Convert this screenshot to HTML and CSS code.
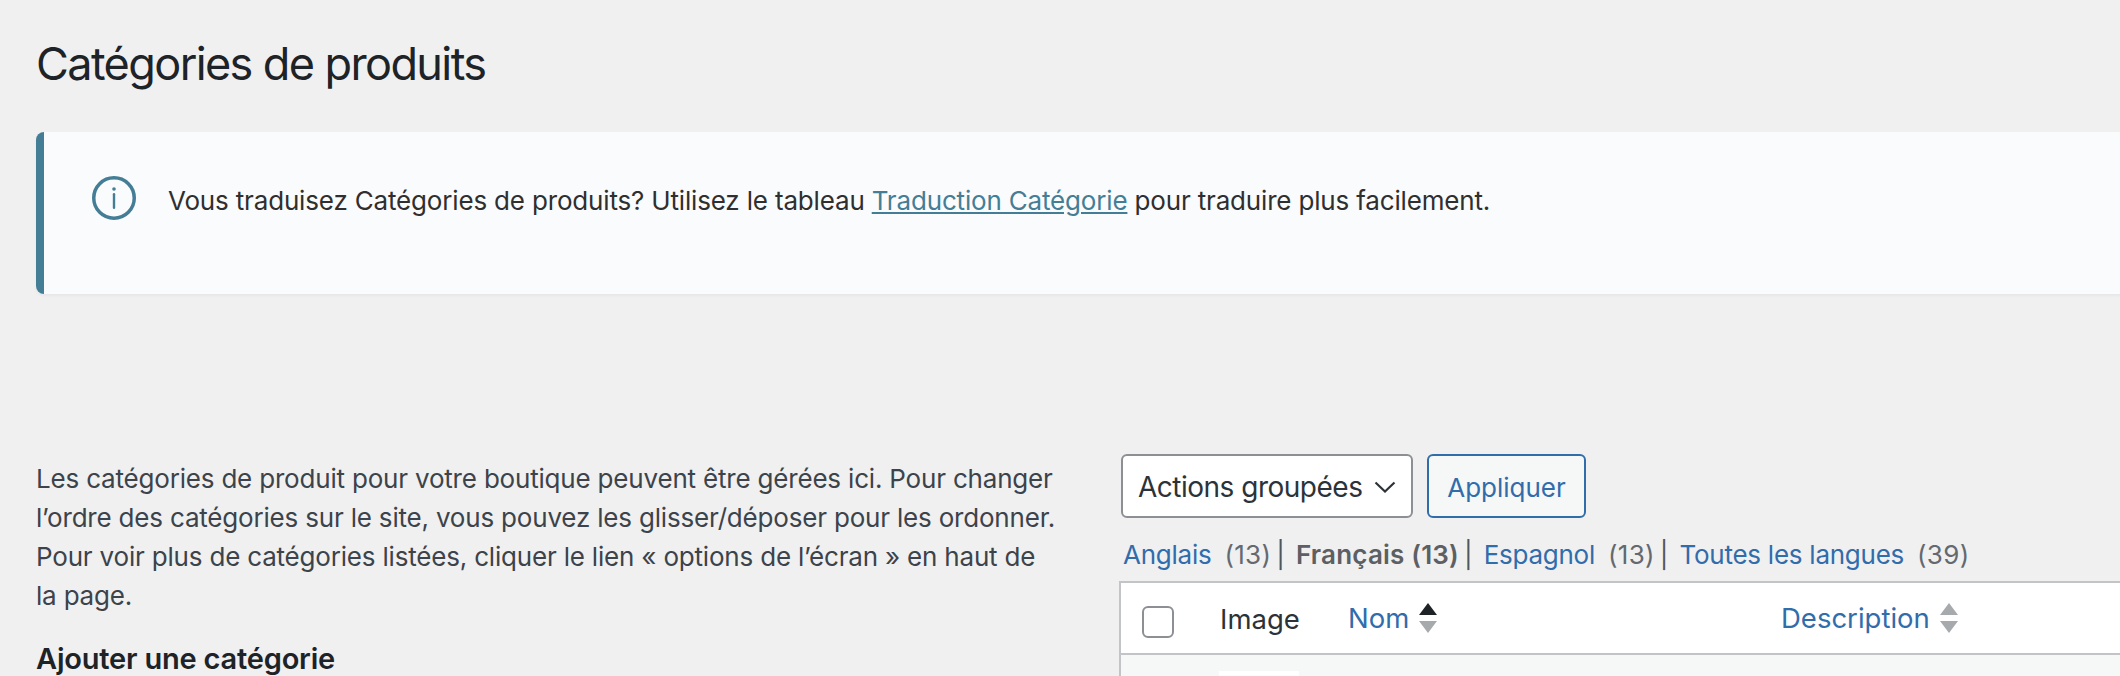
FILE: index.html
```html
<!DOCTYPE html>
<html lang="fr">
<head>
<meta charset="utf-8">
<title>Catégories de produits</title>
<link rel="stylesheet" href="styles.css">
</head>
<body>
<div class="wrap">
  <h1 class="title">Catégories de produits</h1>
  <div class="notice">
    <svg class="notice-icon" viewBox="0 0 44 44" aria-hidden="true"><circle cx="22" cy="22" r="20.25" fill="none" stroke="#447e96" stroke-width="3.5"/><circle cx="22" cy="13" r="1.8" fill="#447e96"/><rect x="20.8" y="17" width="2.4" height="16" rx="1.2" fill="#447e96"/></svg>
    <p class="notice-text">Vous traduisez Catégories de produits? Utilisez le tableau <a class="notice-link" href="#">Traduction Catégorie</a> pour traduire plus facilement.</p>
  </div>
  <div class="columns">
    <div class="col-left">
      <p class="intro">Les catégories de produit pour votre boutique peuvent être gérées ici. Pour changer l’ordre des catégories sur le site, vous pouvez les glisser/déposer pour les ordonner. Pour voir plus de catégories listées, cliquer le lien « options de l’écran » en haut de la page.</p>
      <h2 class="subtitle">Ajouter une catégorie</h2>
    </div>
    <div class="col-right">
      <div class="actions">
        <div class="select">Actions groupées<svg class="chevron" viewBox="0 0 22 12" aria-hidden="true"><path d="M1.5 1.5L11 10.5l9.5-9" fill="none" stroke="#2c3338" stroke-width="2.2"/></svg></div>
        <a class="button" href="#">Appliquer</a>
      </div>
      <div class="langs"><a href="#">Anglais</a><span class="count">(13)</span><span class="sep">|</span><b>Français (13)</b><span class="sep">|</span><a href="#">Espagnol</a><span class="count">(13)</span><span class="sep">|</span><a href="#">Toutes les langues</a><span class="count">(39)</span></div>
      <div class="table">
        <div class="thead">
          <span class="check"></span>
          <span class="th-image">Image</span>
          <a class="th-name" href="#">Nom<span class="sort"><i class="up dark"></i><i class="down"></i></span></a>
          <a class="th-desc" href="#">Description<span class="sort"><i class="up"></i><i class="down"></i></span></a>
        </div>
        <div class="row"><span class="thumb"></span></div>
      </div>
    </div>
  </div>
</div>
</body>
</html>
```
FILE: styles.css
```css
* { box-sizing: border-box; }
html, body { margin: 0; height: 676px; overflow: hidden; }
body { background: #f0f0f1; font-family: Inter, "Liberation Sans", sans-serif; font-size: 26px; line-height: 39px; color: #3c434a; }
.wrap { padding: 35px 0 0 36px; width: 2160px; }
.title { margin: 0; font-size: 45px; line-height: 58px; font-weight: 400; letter-spacing: -1.6px; color: #1d2327; }
.notice { margin-top: 39px; height: 162px; display: flex; align-items: center; background: #fafbfd; border-left: 8px solid #447e96; border-radius: 8px 0 0 8px; box-shadow: 0 2px 3px rgba(0,0,0,.04); padding-left: 48px; }
.notice-icon { width: 44px; height: 44px; flex: none; margin-top: -31px; }
.notice-text { margin: 0 0 0 32px; color: #2f2f30; position: relative; top: -13px; letter-spacing: -.17px; }
.notice-link { color: #447e96; }
.columns { display: flex; margin-top: 160px; }
.col-left { width: 1083px; flex: none; padding: 5px 60px 0 0; }
.intro { margin: 0; letter-spacing: -.19px; }
.subtitle { margin: 24px 0 0; font-size: 29px; line-height: 39px; font-weight: 600; letter-spacing: -.2px; color: #1d2327; }
.col-right { flex: 1; }
.actions { display: flex; gap: 14px; margin-left: 2px; }
.select { width: 292px; height: 64px; display: flex; align-items: center; justify-content: space-between; padding: 2px 15px 0; background: #fff; border: 2px solid #8c8f94; border-radius: 6px; color: #2c3338; font-size: 28px; letter-spacing: -.5px; }
.chevron { width: 22px; height: 12px; }
.button { width: 159px; height: 64px; display: flex; align-items: center; justify-content: center; padding-top: 2px; background: #f6f7f7; border: 2px solid #316cab; border-radius: 6px; color: #316cab; text-decoration: none; }
.langs { margin: 17px 0 0 4px; height: 39px; color: #646970; white-space: nowrap; }
.langs a { color: #316cab; text-decoration: none; letter-spacing: -.25px; }
.langs b { font-weight: 600; color: #5c5f63; letter-spacing: .2px; }
.count { margin-left: 13px; letter-spacing: .3px; }
.sep { margin: 0 11px 0 5px; color: #50575e; }
.table { margin-top: 7px; background: #fff; border: 2px solid #c3c4c7; }
.thead { display: flex; align-items: center; height: 72px; border-bottom: 2px solid #c3c4c7; position: relative; font-size: 27.5px; }
.check { position: absolute; left: 21px; top: 23px; width: 32px; height: 32px; background: #fff; border: 2px solid #8c8f94; border-radius: 6px; }
.th-image { position: absolute; left: 99px; top: 17px; color: #2c3338; }
.th-name, .th-desc { position: absolute; display: flex; align-items: center; color: #316cab; text-decoration: none; }
.th-name { left: 227px; }
.th-desc { left: 660px; }
.sort { display: flex; flex-direction: column; gap: 6px; margin-left: 10px; }
.sort i { width: 0; height: 0; border-left: 9px solid transparent; border-right: 9px solid transparent; }
.up { border-bottom: 12px solid #a7aaad; }
.up.dark { border-bottom-color: #1d2327; }
.down { border-top: 12px solid #a7aaad; }
.row { background: #f6f7f7; height: 40px; padding: 16px 0 0 98px; }
.thumb { display: block; width: 80px; height: 40px; background: #fff; }
```
